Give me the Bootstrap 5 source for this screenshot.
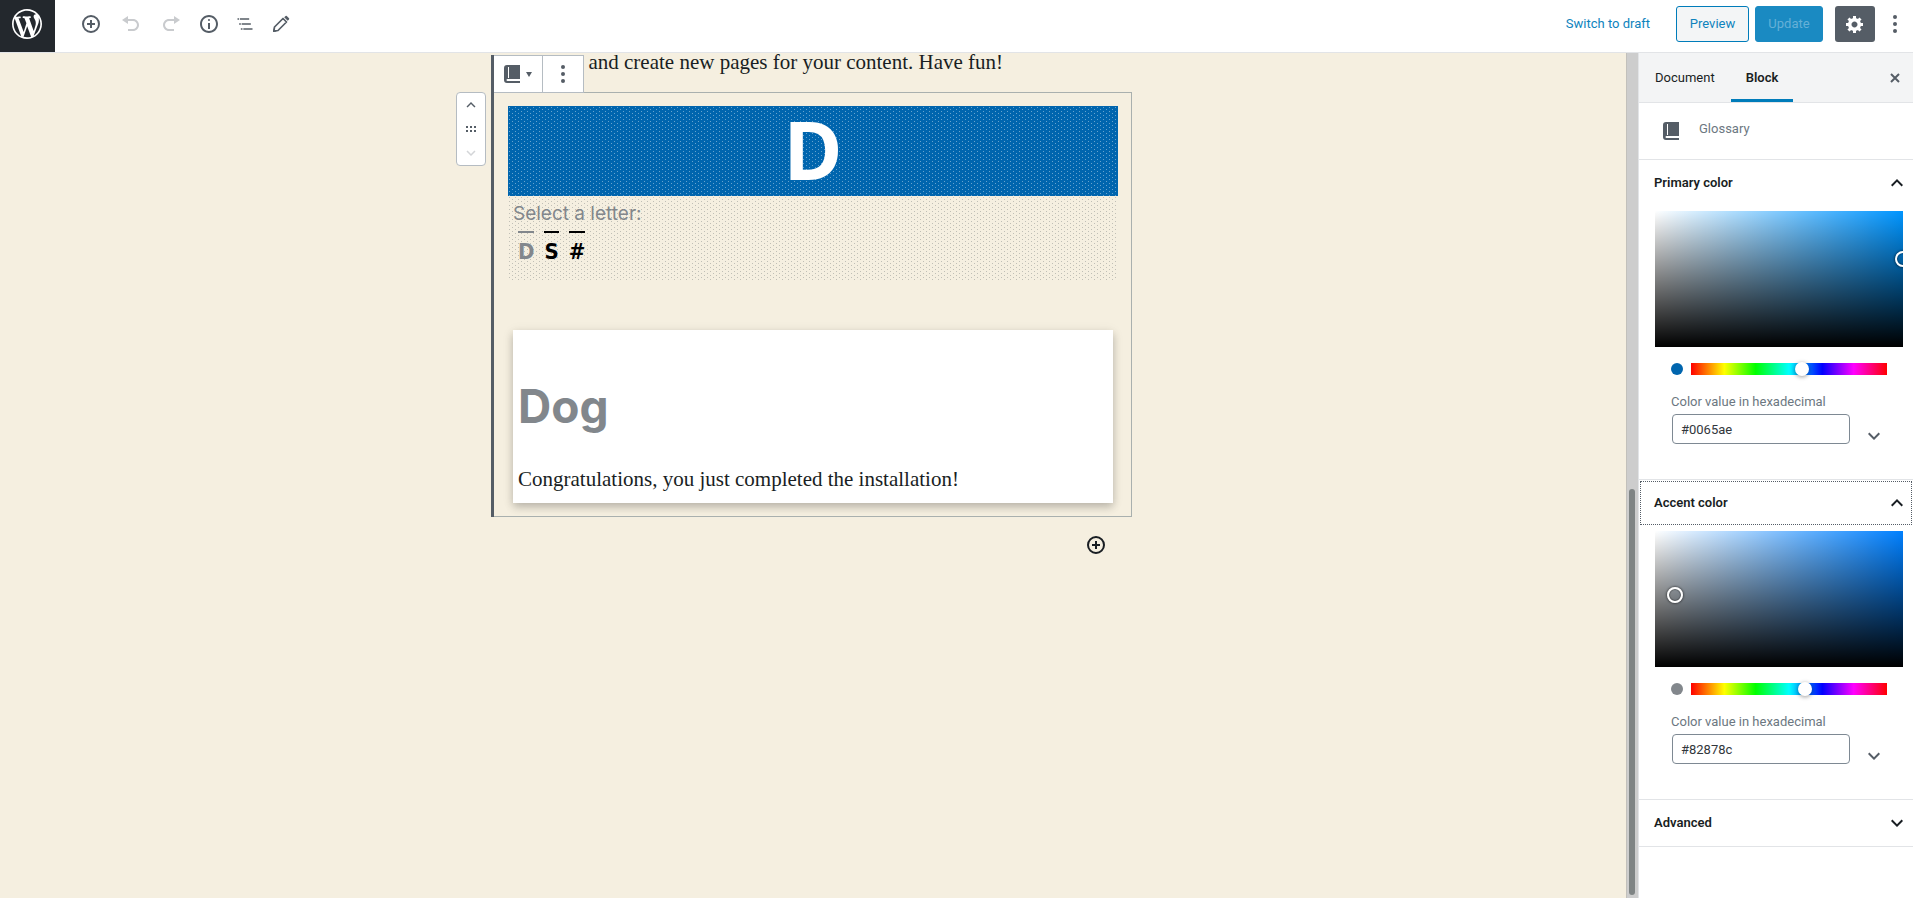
<!DOCTYPE html>
<html lang="en">
<head>
<meta charset="utf-8">
<meta name="viewport" content="width=device-width, initial-scale=1">
<title>Edit Page</title>
<link href="https://cdn.jsdelivr.net/npm/bootstrap@5.3.0/dist/css/bootstrap.min.css" rel="stylesheet">
<style>
  body { font-family: Roboto, "Noto Sans", sans-serif; font-size: 13px; line-height: 18px; color: #23282d; background: #fff; }
  svg { fill: currentColor; display: block; }
  button.bare { border: 0; background: none; padding: 0; color: #555d66; }
  .ink { color: #555d66; }

  /* Top bar */
  .topbar { height: 53px; border-bottom: 1px solid #e2e4e7; }
  .wp-home { width: 55px; height: 52px; background: #23282d; color: #fff; padding-right: 1px; }
  .tools { height: 48px; margin-left: 18px; }
  .tools .bare { width: 36px; height: 36px; display: flex; align-items: center; justify-content: center; }
  .tools .bare:disabled { color: #c9cbce; }
  .tools .group-start { margin-left: 2px; }
  .actions { height: 48px; }
  .actions .btn { height: 36px; font-size: 13px; line-height: 18px; border-radius: 3px; padding: 0; }
  .actions a { color: #0e83bd; margin-right: 26px; }
  .actions .btn-preview { width: 73px; border: 1px solid #007cba; background: #f3f5f6; color: #0e83bd; margin-right: 6px; }
  .actions .btn-update:disabled { width: 68px; background: #1a8ac2; border-color: #1a8ac2; color: #65b0d7; opacity: 1; }
  .actions .btn-gear { width: 40px; margin: 0 18px 0 12px; background: #555d66; color: #fff; }

  /* Canvas */
  .canvas { background: #f5efe0; min-width: 0; }
  .column { max-width: 610px; margin: 0 auto; }
  .story { font-family: "Liberation Serif", serif; font-size: 21px; line-height: 32px; color: #191e23; }
  .lead-in { height: 39px; margin: 0; line-height: 18px; }
  .block-frame { margin: 0 -14px; padding: 13px; border: 1px solid #a9b0ae; border-left: 0; padding-left: 14px; }
  .block-frame::before { content: ""; position: absolute; left: -3px; top: -38px; bottom: -1px; width: 3px; background: #555d66; }
  .block-tools { position: absolute; left: 0; top: -38px; height: 38px; background: #fff; border: 1px solid #b5bcc2; border-left: 0; }
  .block-tools .bare { display: flex; align-items: center; justify-content: center; height: 36px; }
  .block-tools .kind { width: 48px; gap: 6px; }
  .block-tools .more { width: 41px; border-left: 1px solid #b5bcc2; }
  .mover { position: absolute; left: -38px; top: -1px; width: 30px; height: 74px; background: #fff; border: 1px solid #b5bcc2; border-radius: 4px; }
  .mover .bare { height: 24px; display: flex; align-items: center; justify-content: center; width: 28px; }
  .glyph-banner, .glyph-picker {
    background-image: conic-gradient(from 270deg at 1px 1px, var(--dot) 90deg, transparent 0), conic-gradient(from 270deg at 1px 1px, var(--dot) 90deg, transparent 0);
    background-size: 6px 4px; background-position: 1px 1px, 4px 3px;
  }
  .glyph-banner { --dot: #66a3ce; background-color: #0065ae; height: 90px; color: #fff; font-family: "Noto Sans", sans-serif; font-size: 80px; line-height: 86px; font-weight: 700; text-align: center; }
  .glyph-picker { --dot: #c0bfb6; height: 84px; padding: 5px; }
  .pick-title { font-family: Inter, sans-serif; font-size: 19px; font-weight: 400; line-height: 26px; color: #82878c; margin: 0; }
  .glyph-links { font-family: "DejaVu Sans Condensed", "DejaVu Sans", sans-serif; font-size: 22px; font-weight: 700; line-height: 38px; gap: 10px; padding: 4px 5px 0; }
  .glyph-links a { color: #000; text-decoration: none; border-top: 2px solid currentColor; }
  .glyph-links a.current { color: #82878c; }
  .entry { margin: 50px 5px 0; background: #fff; padding: 50px 5px 8px; box-shadow: 0 4px 8px rgba(0,0,0,.2), 0 2px 12px rgba(0,0,0,.08); }
  .entry h2 { font-family: Inter, sans-serif; font-size: 46px; line-height: 52px; font-weight: 700; color: #82878c; margin: 0 0 31px; }
  .entry p { margin: 0; }
  .adder { padding: 18px 12px 0; }
  .adder .bare { color: #191e23; }
  .rail { width: 12px; background: #cdcdcd; border-left: 1px solid #c2c0bb; padding-left: 2px; }
  .rail div { width: 6px; border-radius: 3px; background: #7f8484; margin-top: 436px; margin-bottom: 3px; flex-grow: 1; }

  /* Sidebar */
  .inspector { width: 275px; border-left: 1px solid #e2e4e7; flex-shrink: 0; overflow: hidden; }
  .tabs-row { height: 50px; background: #f3f4f5; border-bottom: 1px solid #e2e4e7; padding-right: 12px; }
  .tabs-row .tab { height: 49px; padding: 0 16px; color: #191e23; border-bottom: 3px solid transparent; border-top: 3px solid transparent; }
  .tabs-row .tab.active { font-weight: 600; border-bottom-color: #007cba; padding: 0 15px; }
  .kind-row { height: 57px; border-bottom: 1px solid #e2e4e7; padding-left: 24px; gap: 20px; color: #6c7781; }
  .kind-row span { padding-bottom: 5px; }
  .panel { border-bottom: 1px solid #e2e4e7; }
  button.panel-head { width: 100%; height: 46px; font-weight: 600; color: #191e23; padding: 0 4px 0 15px; }
  .panel-head.focused { outline: 1px dotted #555d66; outline-offset: -2px; }
  .color-body { padding: 5px 10px 35px 16px; }
  .shade { height: 136px; overflow: hidden; background: linear-gradient(to top, #000, transparent), linear-gradient(to right, #fff, transparent), var(--hue); }
  .shade span { position: absolute; width: 16px; height: 16px; margin: -8px; border-radius: 50%; border: 2px solid #fff; box-shadow: 0 0 2px 1px rgba(0,0,0,.4), inset 0 0 1px 1px rgba(0,0,0,.3); }
  .hue-row { padding: 16px 16px 0; gap: 8px; }
  .hue-row i { width: 12px; height: 12px; border-radius: 50%; flex-shrink: 0; }
  .hue-row input { appearance: none; -webkit-appearance: none; min-width: 0; flex-grow: 1; height: 12px; margin: 0; background: linear-gradient(to right, #f00 0%, #ff0 17%, #0f0 33%, #0ff 50%, #00f 67%, #f0f 83%, #f00 100%); }
  .hue-row input::-webkit-slider-thumb { -webkit-appearance: none; width: 14px; height: 14px; border-radius: 50%; background: #fff; box-shadow: 0 1px 4px rgba(0,0,0,.4); }
  .hex-row { padding: 18px 16px 0; }
  .hex-row label { color: #6c7781; display: block; margin-bottom: 3px; }
  .hex-row .form-control { height: 30px; width: 178px; margin-left: 1px; padding: 0 8px; font-size: 13px; line-height: 18px; border: 1px solid #7e8993; border-radius: 4px; color: #32373c; }
  .hex-row .bare { margin: 0 0 -4px 12px; }
</style>
</head>
<body class="vh-100 d-flex flex-column overflow-hidden">
<svg width="0" height="0" class="position-absolute" aria-hidden="true">
  <symbol id="up" viewBox="0 0 24 24"><path d="M12 8l-6 6 1.41 1.41L12 10.83l4.59 4.58L18 14z"/></symbol>
  <symbol id="down" viewBox="0 0 24 24"><path d="M7.41 8.59L12 13.17l4.59-4.58L18 10l-6 6-6-6z"/></symbol>
  <symbol id="book" viewBox="0 0 16 18"><path d="M3 0h13v14H3.500a1 1 0 0 0 0 2H16v2H3a3 3 0 0 1-3-3V3a3 3 0 0 1 3-3zm1 2v11h1V2z" fill-rule="evenodd"/></symbol>
  <symbol id="dots" viewBox="0 0 4 18"><circle cx="2" cy="2" r="2"/><circle cx="2" cy="9" r="2"/><circle cx="2" cy="16" r="2"/></symbol>
  <symbol id="add" viewBox="0 0 20 20"><path d="M10 1a9 9 0 1 0 0 18 9 9 0 0 0 0-18zm0 16a7 7 0 1 1 0-14 7 7 0 0 1 0 14zm1-11H9v3H6v2h3v3h2v-3h3V9h-3z"/></symbol>
</svg>

<header class="topbar d-flex flex-shrink-0">
  <a href="#" class="wp-home d-flex align-items-center justify-content-center" aria-label="View Pages">
    <svg class="mb-1" width="30" height="30" viewBox="0 0 20 20"><path d="M20 10c0-5.510-4.490-10-10-10C4.480 0 0 4.490 0 10c0 5.520 4.480 10 10 10 5.510 0 10-4.480 10-10zM7.780 15.370L4.370 6.220c.55-.02 1.170-.08 1.170-.08.5-.06.44-1.130-.06-1.110 0 0-1.450.11-2.370.11-.18 0-.37 0-.58-.01C4.120 2.690 6.870 1.110 10 1.110c2.330 0 4.450.87 6.050 2.340-.68-.11-1.650.39-1.650 1.580 0 .74.45 1.360.9 2.100.35.61.55 1.360.55 2.460 0 1.490-1.400 5-1.400 5l-3.030-8.370c.54-.02.82-.17.82-.17.5-.05.44-1.250-.06-1.220 0 0-1.440.12-2.380.12-.87 0-2.330-.12-2.330-.12-.5-.03-.56 1.200-.06 1.220l.92.08 1.260 3.410zM17.410 10c.24-.64.74-1.870.43-4.250.7 1.290 1.050 2.710 1.050 4.250 0 3.290-1.730 6.240-4.400 7.780.97-2.590 1.940-5.200 2.920-7.780zM6.100 18.090C3.120 16.650 1.110 13.530 1.110 10c0-1.300.23-2.480.72-3.590C3.250 10.300 4.670 14.200 6.100 18.090zm4.030-6.630l2.580 6.980c-.86.29-1.760.45-2.710.45-.79 0-1.570-.11-2.290-.33.81-2.380 1.620-4.740 2.420-7.100z"/></svg>
  </a>
  <div class="tools d-flex align-items-center">
    <button class="bare me-1" aria-label="Add block"><svg width="20" height="20"><use href="#add"/></svg></button>
    <button class="bare me-1" disabled aria-label="Undo"><svg width="20" height="20" viewBox="0 0 20 20"><path d="M12 5H7V2L1 6l6 4V7h5c2.200 0 4 1.800 4 4s-1.800 4-4 4H7v2h5c3.300 0 6-2.700 6-6s-2.700-6-6-6z"/></svg></button>
    <button class="bare" disabled aria-label="Redo"><svg width="20" height="20" viewBox="0 0 20 20"><path d="M8 5h5V2l6 4-6 4V7H8c-2.200 0-4 1.800-4 4s1.800 4 4 4h5v2H8c-3.300 0-6-2.700-6-6s2.700-6 6-6z"/></svg></button>
    <button class="bare group-start" aria-label="Content structure"><svg width="20" height="20" viewBox="0 0 20 20"><path d="M9 15h2V9H9v6zm1-10c-.5 0-1 .5-1 1s.5 1 1 1 1-.5 1-1-.5-1-1-1zm0-4c-5 0-9 4-9 9s4 9 9 9 9-4 9-9-4-9-9-9zm0 16c-3.900 0-7-3.100-7-7s3.100-7 7-7 7 3.100 7 7-3.100 7-7 7z"/></svg></button>
    <button class="bare" aria-label="Block navigation"><svg width="20" height="20" viewBox="0 0 24 24"><path d="M5 5H3v2h2V5zm3 8h11v-2H8v2zm9-8H6v2h11V5zM7 11H5v2h2v-2zm0 8h2v-2H7v2zm3-2v2h11v-2H10z"/></svg></button>
    <button class="bare" aria-label="Modes"><svg width="18" height="18" viewBox="0 0 18 18"><path d="M11 3.500L2.500 12 1.800 16.200 6 15.500 14.500 7z" fill="none" stroke="currentColor" stroke-width="1.700" stroke-linejoin="round"/><path d="M12.200 2.300l1.400-1.300q.6-.5 1.200 0l2.200 2.200q.5.6 0 1.200l-1.300 1.400zM1 17l.6-3.500L4.500 16.400z"/></svg></button>
  </div>
  <div class="actions d-flex align-items-center ms-auto pe-3">
    <a href="#" class="text-decoration-none">Switch to draft</a>
    <button class="btn btn-preview">Preview</button>
    <button class="btn btn-update" disabled>Update</button>
    <button class="btn btn-gear d-flex align-items-center justify-content-center" aria-label="Settings"><svg width="20" height="20" viewBox="0 0 20 20"><path d="M18 12h-2.180c-.17.7-.44 1.350-.81 1.930l1.540 1.540-2.100 2.100-1.540-1.540c-.58.36-1.230.63-1.910.79V19H8v-2.180c-.68-.16-1.330-.43-1.910-.79l-1.540 1.540-2.120-2.120 1.540-1.540c-.36-.58-.63-1.230-.79-1.910H1V9.030h2.170c.16-.7.44-1.350.8-1.940L2.430 5.550l2.100-2.100 1.540 1.540c.58-.37 1.240-.64 1.930-.81V2h3v2.180c.68.16 1.330.43 1.910.79l1.540-1.540 2.120 2.120-1.540 1.540c.36.59.64 1.240.8 1.940H18V12zm-8.500 1.500c1.660 0 3-1.340 3-3s-1.340-3-3-3-3 1.340-3 3 1.340 3 3 3z"/></svg></button>
    <button class="bare" aria-label="More tools"><svg width="4" height="18"><use href="#dots"/></svg></button>
  </div>
</header>

<div class="d-flex flex-grow-1 overflow-hidden">
  <main class="canvas flex-grow-1 overflow-hidden">
    <div class="column story">
      <p class="lead-in">this page and create new pages for your content. Have fun!</p>
      <section class="block-frame position-relative">
        <div class="block-tools d-flex">
          <button class="bare kind" aria-label="Change block type"><svg width="16" height="18"><use href="#book"/></svg><svg width="6" height="5" viewBox="0 0 6 5"><path d="M0 0h6L3 5z"/></svg></button>
          <button class="bare more" aria-label="More options"><svg width="4" height="18"><use href="#dots"/></svg></button>
        </div>
        <div class="mover">
          <button class="bare" aria-label="Move up"><svg width="18" height="18"><use href="#up"/></svg></button>
          <button class="bare" aria-label="Drag"><svg width="10" height="6" viewBox="0 0 10 6"><path d="M0 0h2v2H0zM4 0h2v2H4zM8 0h2v2H8zM0 4h2v2H0zM4 4h2v2H4zM8 4h2v2H8z"/></svg></button>
          <button class="bare opacity-25" aria-label="Move down"><svg width="18" height="18"><use href="#down"/></svg></button>
        </div>
        <div class="glyph-banner">D</div>
        <div class="glyph-picker">
          <h3 class="pick-title">Select a letter:</h3>
          <nav class="glyph-links d-flex"><a href="#" class="current">D</a><a href="#">S</a><a href="#">#</a></nav>
        </div>
        <article class="entry">
          <h2>Dog</h2>
          <p>Congratulations, you just completed the installation!</p>
        </article>
      </section>
      <div class="adder d-flex justify-content-end"><button class="bare" aria-label="Add block"><svg width="20" height="20"><use href="#add"/></svg></button></div>
    </div>
  </main>
  <div class="rail d-flex flex-column flex-shrink-0"><div></div></div>

  <aside class="inspector">
    <div class="tabs-row d-flex align-items-center">
      <button class="bare tab">Document</button>
      <button class="bare tab active">Block</button>
      <button class="bare ms-auto" aria-label="Close settings"><svg width="12" height="12" viewBox="0 0 12 12"><path d="M2 2l8 8M10 2l-8 8" stroke="currentColor" stroke-width="2"/></svg></button>
    </div>
    <div class="kind-row d-flex align-items-center">
      <svg class="ink" width="16" height="18"><use href="#book"/></svg><span>Glossary</span>
    </div>

    <section class="panel">
      <button class="bare panel-head d-flex align-items-center justify-content-between">Primary color<svg width="24" height="24"><use href="#up"/></svg></button>
      <div class="color-body" style="--hue:#0095ff">
        <div class="shade position-relative"><span style="left:100%;top:35%"></span></div>
        <div class="hue-row d-flex align-items-center"><i style="background:#0065ae"></i><input type="range" min="0" max="360" value="205" aria-label="Hue"></div>
        <div class="hex-row d-flex align-items-end">
          <div><label for="hex1">Color value in hexadecimal</label><input id="hex1" class="form-control" value="#0065ae"></div>
          <button class="bare" aria-label="Change color format"><svg width="24" height="24"><use href="#down"/></svg></button>
        </div>
      </div>
    </section>

    <section class="panel">
      <button class="bare panel-head focused d-flex align-items-center justify-content-between">Accent color<svg width="24" height="24"><use href="#up"/></svg></button>
      <div class="color-body" style="--hue:#0080ff">
        <div class="shade position-relative"><span style="left:8%;top:47%"></span></div>
        <div class="hue-row d-flex align-items-center"><i style="background:#82878c"></i><input type="range" min="0" max="360" value="211" aria-label="Hue"></div>
        <div class="hex-row d-flex align-items-end">
          <div><label for="hex2">Color value in hexadecimal</label><input id="hex2" class="form-control" value="#82878c"></div>
          <button class="bare" aria-label="Change color format"><svg width="24" height="24"><use href="#down"/></svg></button>
        </div>
      </div>
    </section>

    <section class="panel">
      <button class="bare panel-head d-flex align-items-center justify-content-between">Advanced<svg width="24" height="24"><use href="#down"/></svg></button>
    </section>
  </aside>
</div>
<script src="https://cdn.jsdelivr.net/npm/bootstrap@5.3.0/dist/js/bootstrap.bundle.min.js"></script>
</body>
</html>
